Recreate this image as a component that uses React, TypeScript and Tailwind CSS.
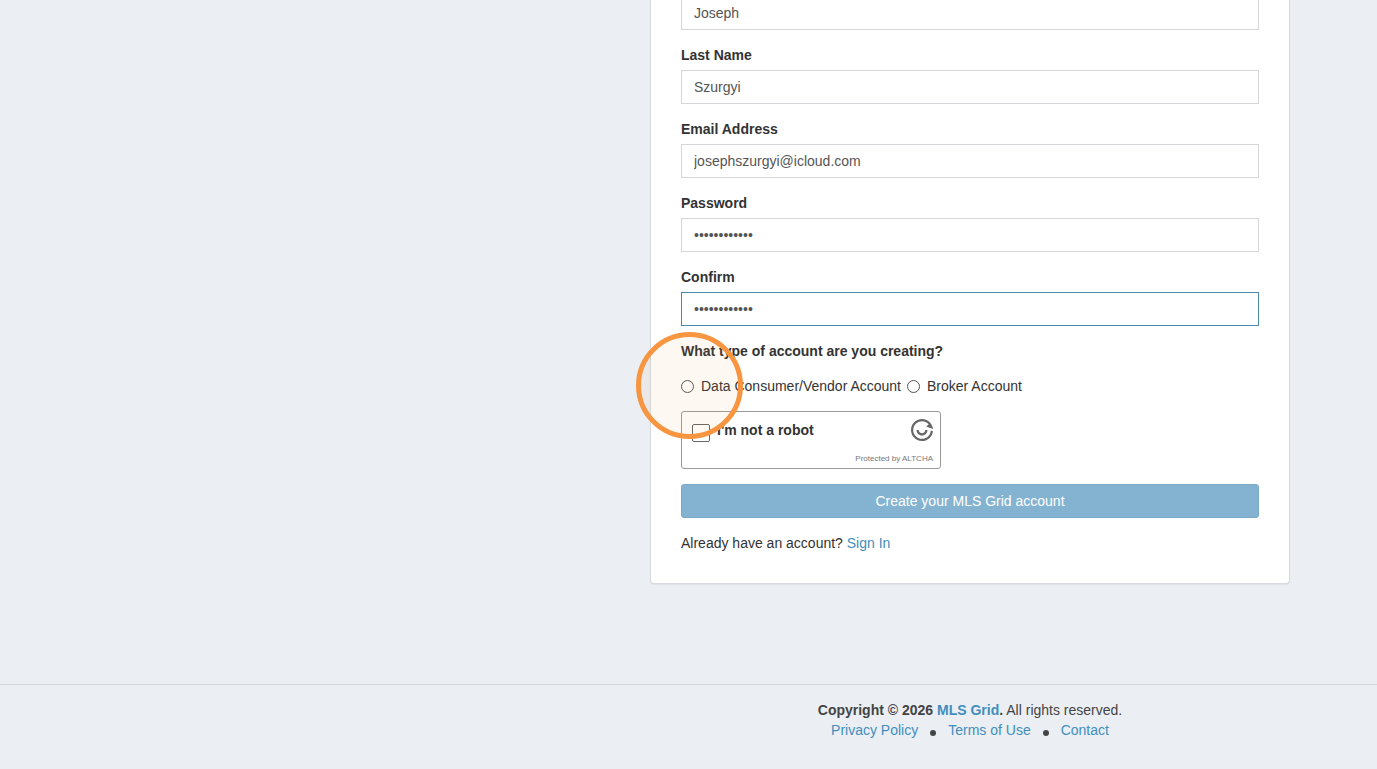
import { useState } from "react";
import type { ReactNode } from "react";

interface FieldProps {
  id: string;
  label?: string;
  type?: string;
  value: string;
  active?: boolean;
}

function Field({ id, label, type = "text", value, active }: FieldProps) {
  const [text, setText] = useState(value);

  return (
    <div className="mb-[15px]">
      {label && (
        <label htmlFor={id} className="mb-[5px] block font-bold">
          {label}
        </label>
      )}
      <input
        id={id}
        type={type}
        value={text}
        aria-label={label ? undefined : "First Name"}
        onChange={(e) => setText(e.target.value)}
        className={`block h-[34px] w-full border bg-white px-3 text-[#555] outline-none ${
          active ? "border-[#4a8aac]" : "border-[#d4d6da]"
        }`}
      />
    </div>
  );
}

function AccountOption({ id, children }: { id: string; children: ReactNode }) {
  return (
    <label htmlFor={id} className="flex items-center gap-[7px]">
      <input
        id={id}
        type="radio"
        name="account"
        className="size-[13px] appearance-none rounded-full border border-[#555] bg-white checked:border-4 checked:border-[#3c8dbc]"
      />
      {children}
    </label>
  );
}

function AltchaLogo() {
  return (
    <svg viewBox="0 0 20 20" className="size-[22px] text-[#666]" fill="currentColor" aria-hidden="true">
      <path d="M2.33955 16.4279C5.88954 20.6586 12.1971 21.2105 16.4279 17.6604C18.4699 15.947 19.6548 13.5911 19.9352 11.1365L17.9886 10.4279C17.8738 12.5624 16.909 14.6459 15.1423 16.1284C11.7577 18.9684 6.71167 18.5269 3.87164 15.1423C1.03163 11.7577 1.4731 6.71166 4.8577 3.87164C8.24231 1.03162 13.2883 1.4731 16.1284 4.8577L13.8302 6.78606L19.9633 9.13364C19.7929 7.15555 19.0335 5.20847 17.6604 3.57212C14.1104 -0.658624 7.80283 -1.21043 3.57212 2.33956C-0.658625 5.88958 -1.21046 12.1971 2.33955 16.4279Z" />
      <path d="M7 10H5C5 12.7614 7.23858 15 10 15C12.7614 15 15 12.7614 15 10H13C13 11.6569 11.6569 13 10 13C8.3431 13 7 11.6569 7 10Z" />
    </svg>
  );
}

function Captcha() {
  return (
    <div className="mb-[15px] flex h-[58px] w-[260px] justify-between rounded-[3px] border border-[#999] pt-[7px] pr-[7px] pl-[10px]">
      <div className="flex items-start gap-[7px]">
        <input
          id="robot"
          type="checkbox"
          className="mt-[5px] size-[18px] appearance-none rounded-[2px] border border-[#666] bg-white checked:bg-[#3c8dbc]"
        />
        <label htmlFor="robot" className="mt-px font-bold">
          I'm not a robot
        </label>
      </div>
      <div className="flex flex-col items-end gap-[13px]">
        <AltchaLogo />
        <p className="text-[8px] leading-[10px] text-[#777]">
          Protected by <a href="#altcha">ALTCHA</a>
        </p>
      </div>
    </div>
  );
}

function Dot() {
  return <span className="mt-[5px] size-[6px] rounded-full bg-[#444]" />;
}

export default function App() {
  return (
    <div className="flex min-h-screen flex-col overflow-hidden bg-[#ebeff4] font-['Liberation_Sans',Arial,sans-serif] text-[14px] leading-[20px] text-[#333]">
      <main className="pl-[563px]">
        <form
          onSubmit={(e) => e.preventDefault()}
          className="mx-auto -mt-1 mb-[100px] max-w-[640px] rounded-b-[4px] border border-t-0 border-[#d6dade] bg-white px-[30px] pb-[30px] shadow-[0_1px_1px_rgba(0,0,0,0.05)]"
        >
          <Field id="first" value="Joseph" />
          <Field id="last" label="Last Name" value="Szurgyi" />
          <Field id="email" label="Email Address" value="josephszurgyi@icloud.com" />
          <Field id="password" label="Password" type="password" value="gridaccount1" />
          <Field id="confirm" label="Confirm" type="password" value="gridaccount1" active />

          <fieldset className="mb-[15px]">
            <legend className="mb-[15px] font-bold">What type of account are you creating?</legend>
            <div className="relative flex gap-[6px]">
              <AccountOption id="vendor">Data Consumer/Vendor Account</AccountOption>
              <AccountOption id="broker">Broker Account</AccountOption>
              {/* highlight ring over the first option */}
              <span className="pointer-events-none absolute -top-[44px] -left-[45px] z-10 size-[107px] rounded-full border-5 border-[#f79540] bg-[#f79540]/7" />
            </div>
          </fieldset>

          <Captcha />

          <button
            type="submit"
            className="mb-[15px] block h-[34px] w-full rounded-[3px] border border-[#7aa9c8] bg-[#84b3d1] text-white"
          >
            Create your MLS Grid account
          </button>
          <p>
            Already have an account?{" "}
            <a href="#signin" className="text-[#428ebc]">
              Sign In
            </a>
          </p>
        </form>
      </main>

      <footer className="border-t border-[#d2d6de] pt-[15px] pb-[15px] pl-[563px] text-[#444]">
        <p className="text-center">
          <strong>
            Copyright © 2026{" "}
            <a href="#home" className="text-[#428ebc]">
              MLS Grid
            </a>
            .
          </strong>{" "}
          All rights reserved.
        </p>
        <nav className="flex items-center justify-center gap-3 text-[#428ebc]">
          <a href="#privacy">Privacy Policy</a>
          <Dot />
          <a href="#terms">Terms of Use</a>
          <Dot />
          <a href="#contact">Contact</a>
        </nav>
      </footer>
    </div>
  );
}
